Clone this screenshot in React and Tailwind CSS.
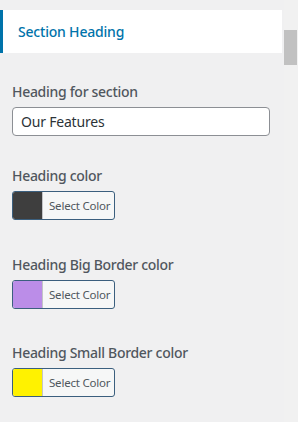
import React from "react";

const ColorField = ({ label, swatch, top }) => {
  return (
    <div className={top}>
      <div className="text-[14px] leading-[20px] font-medium tracking-[-0.3px] text-[#50575e]">{label}</div>
      <button
        type="button"
        className="mt-[5px] flex h-[29px] w-[103px] overflow-hidden rounded-[3px] border border-[#3b5f7e] bg-[#f6f7f7]"
      >
        <span className={`h-full w-[30px] shrink-0 border-r border-[#c3c4c7] ${swatch}`} />
        <span className="flex h-full items-center whitespace-nowrap pl-[6px] text-[11.5px] tracking-[-0.2px] text-[#50575e]">
          Select Color
        </span>
      </button>
    </div>
  );
};

const App = () => {
  return (
    <div
      className="flex h-[422px] w-[298px] overflow-hidden bg-[#f0f0f1]"
      style={{ fontFamily: '"Noto Sans", "Open Sans", sans-serif' }}
    >
      <div className="w-[284px] shrink-0">
        <div className="mt-[10px] flex h-[43px] w-[282px] items-center border-l-[3px] border-[#0073aa] bg-white pl-[15px]">
          <span className="text-[14px] font-medium tracking-[-0.2px] text-[#0073aa]">Section Heading</span>
        </div>

        <div className="px-[12px]">
          <div className="mt-[29px]">
            <div className="text-[14px] leading-[20px] font-medium tracking-[-0.3px] text-[#50575e]">Heading for section</div>
            <input
              type="text"
              defaultValue="Our Features"
              className="mt-[5px] h-[29px] w-[258px] rounded-[4px] border border-[#8c8f94] bg-white px-[8px] text-[14px] tracking-[-0.2px] text-[#2c3338] outline-none"
            />
          </div>

          <ColorField label="Heading color" swatch="bg-[#3e3e3e]" top="mt-[30px]" />
          <ColorField label="Heading Big Border color" swatch="bg-[#bb8de8]" top="mt-[35px]" />
          <ColorField label="Heading Small Border color" swatch="bg-[#fff200]" top="mt-[34px]" />
        </div>
      </div>

      <div className="w-[14px] bg-[#f1f1f1]">
        <div className="mt-[30px] h-[35px] w-[13px] bg-[#c1c1c1]" />
      </div>
    </div>
  );
};

export default App;
